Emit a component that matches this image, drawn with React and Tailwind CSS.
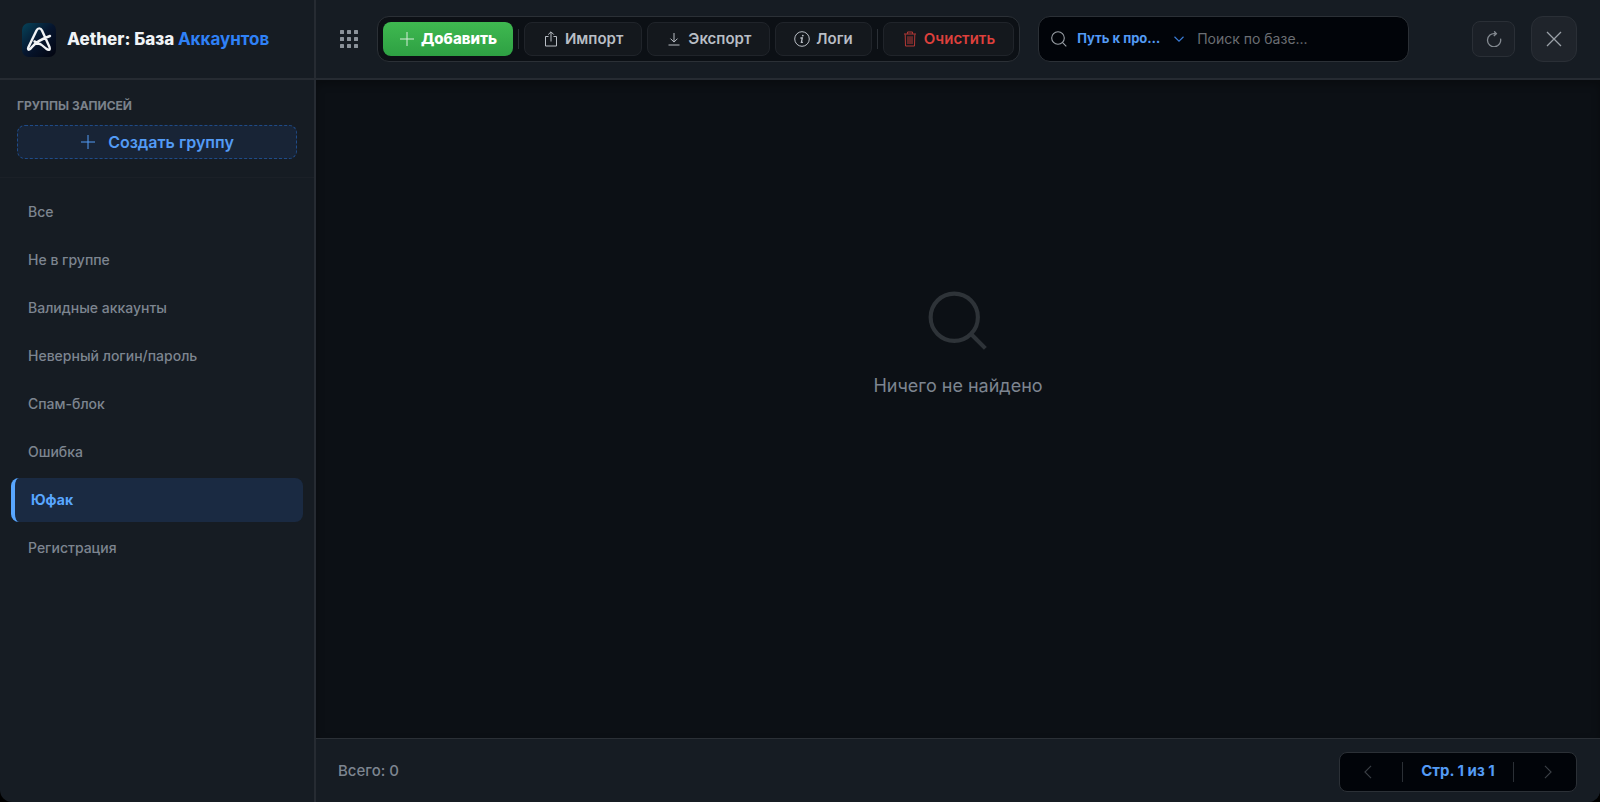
import React, { useState } from "react";

const groups = [
  "Все",
  "Не в группе",
  "Валидные аккаунты",
  "Неверный логин/пароль",
  "Спам-блок",
  "Ошибка",
  "Юфак",
  "Регистрация",
];

const Icon = ({ children, className, strokeWidth = 1 }) => (
  <svg
    viewBox="0 0 16 16"
    fill="none"
    stroke="currentColor"
    strokeWidth={strokeWidth}
    className={className}
    aria-hidden="true"
  >
    {children}
  </svg>
);

const PlusIcon = ({ className }) => (
  <Icon className={className}>
    <path d="M8 1v14M1 8h14" />
  </Icon>
);

const ShareIcon = ({ className }) => (
  <Icon className={className}>
    <path d="M5.5 5.5h-3v9.500h11v-9.500h-3" />
    <path d="M8 10.500V1M5.200 3.600L8 0.800l2.800 2.800" />
  </Icon>
);

const DownloadIcon = ({ className }) => (
  <Icon className={className}>
    <path d="M8 2v9M4.500 7.600L8 11.100l3.500-3.500M2.500 14h11" />
  </Icon>
);

const InfoIcon = ({ className }) => (
  <Icon className={className}>
    <circle cx="8" cy="8" r="7.3" />
    <path d="M6.4 7h1.9L7.4 11.4h1.5" strokeWidth="1.3" />
    <circle cx="8.8" cy="4.6" r="0.9" fill="currentColor" stroke="none" />
  </Icon>
);

const TrashIcon = ({ className }) => (
  <Icon className={className}>
    <path d="M2 3h12M5.500 2.800V1h5v1.800M3.200 3.300l0.300 11.700h9l0.300-11.700" />
    <path d="M6 5.200v7.800M8 5.200v7.800M10 5.200v7.800" />
  </Icon>
);

const SearchIcon = ({ className }) => (
  <Icon className={className} strokeWidth={1.1}>
    <circle cx="7" cy="7" r="6.3" />
    <path d="M11.400 11.400l3.900 3.900" />
  </Icon>
);

const GripIcon = ({ className }) => (
  <svg viewBox="0 0 18 18" fill="currentColor" className={className} aria-hidden="true">
    {[0, 7, 14].map((y) =>
      [0, 7, 14].map((x) => (
        <rect key={`${x}-${y}`} x={x} y={y} width="4" height="4" rx="0.6" />
      ))
    )}
  </svg>
);

const Logo = () => (
  <svg viewBox="0 0 34 34" className="size-[34px] shrink-0" aria-hidden="true">
    <defs>
      <linearGradient id="logo-bg" x1="0" y1="0" x2="1" y2="1">
        <stop offset="0" stopColor="#064359" />
        <stop offset="0.5" stopColor="#06152e" />
        <stop offset="1" stopColor="#03040f" />
      </linearGradient>
    </defs>
    <rect width="34" height="34" rx="7" fill="url(#logo-bg)" />
    <path
      d="M28 13C22 15 14 19 9.500 24.500C7.500 27.500 5 27.500 6.500 24L14.500 7.500C15.800 4.700 18.700 4.700 20 7.500L27.500 24C28.500 27.500 26.500 27.500 24 25.500C20.500 22 17 20 12.500 18.500"
      fill="none"
      stroke="#f1f3f5"
      strokeWidth="2.400"
      strokeLinecap="round"
      strokeLinejoin="round"
    />
  </svg>
);

const ToolButton = ({ children, className = "text-[#b9bec5]" }) => (
  <button
    type="button"
    className={`flex h-[34px] items-center gap-1.5 rounded-lg border border-[#20242a] bg-[#14181d] px-[18px] text-[15px] font-semibold ${className}`}
  >
    {children}
  </button>
);

const Divider = () => <span className="h-5 w-px bg-[#2b3036]" />;

const Sidebar = () => {
  const [active, setActive] = useState("Юфак");

  return (
    <aside className="flex w-[316px] shrink-0 flex-col border-r-2 border-[#262b32]">
      <div className="flex h-20 items-center gap-[11px] border-b-2 border-[#262b32] px-[22px] pt-0.5">
        <Logo />
        <h1 className="text-[17px] font-extrabold whitespace-nowrap text-[#f0f3f6]">
          Aether: База <span className="font-bold text-[#2f81f7]">Аккаунтов</span>
        </h1>
      </div>

      <div className="border-b border-[#1b2027] px-[17px] py-[18px]">
        <h2 className="mb-[11px] text-xs font-bold text-[#7b828b] uppercase">
          Группы записей
        </h2>
        <button
          type="button"
          className="flex h-[34px] w-full items-center justify-center gap-3 rounded-lg border border-dashed border-[#1f4b88] bg-[#182436] text-base font-semibold text-[#539bf5]"
        >
          <PlusIcon className="size-4" />
          Создать группу
        </button>
      </div>

      <nav className="flex flex-col gap-1 px-[11px] pt-3">
        {groups.map((group) => (
          <button
            key={group}
            type="button"
            onClick={() => setActive(group)}
            className={
              group === active
                ? "flex h-11 items-center rounded-lg border-l-4 border-[#58a6ff] bg-[#1a2a42] px-4 text-sm font-bold text-[#58a6ff]"
                : "flex h-11 items-center rounded-lg border border-transparent px-4 text-sm font-medium text-[#7d8590]"
            }
          >
            {group}
          </button>
        ))}
      </nav>
    </aside>
  );
};

const Toolbar = () => (
  <header className="flex h-20 shrink-0 items-center border-b-2 border-[#262b32] bg-[#161c23] pr-[23px] pl-6">
    <GripIcon className="mr-[19px] size-[18px] shrink-0 text-[#8b929a]" />

    <div className="flex h-[46px] shrink-0 items-center gap-[5px] rounded-xl border border-[#2b3036] bg-[#0c1015] px-[5px]">
      <button
        type="button"
        className="flex h-[34px] items-center gap-1.5 rounded-lg bg-linear-to-b from-[#3fb950] to-[#2ea043] px-4 text-[15px] font-extrabold text-white"
      >
        <PlusIcon className="size-4 opacity-80" />
        Добавить
      </button>
      <Divider />
      <ToolButton>
        <ShareIcon className="size-4" />
        Импорт
      </ToolButton>
      <ToolButton>
        <DownloadIcon className="size-4" />
        Экспорт
      </ToolButton>
      <ToolButton>
        <InfoIcon className="size-4" />
        Логи
      </ToolButton>
      <Divider />
      <ToolButton className="text-[#dd403c]">
        <TrashIcon className="size-4 opacity-80" />
        Очистить
      </ToolButton>
    </div>

    <div className="ml-[18px] flex h-[46px] w-[371px] min-w-0 items-center rounded-xl border border-[#2b3036] bg-[#010409] px-3">
      <SearchIcon className="size-4 shrink-0 text-[#9aa0a7]" />
      <div className="relative ml-2.5 flex w-[108px] shrink-0 items-center">
        <select
          aria-label="Поле поиска"
          className="w-[88px] appearance-none truncate bg-transparent text-[13px] font-bold text-[#539bf5] outline-none"
        >
          <option>Путь к профилю</option>
          <option>Логин</option>
        </select>
        <Icon className="pointer-events-none absolute right-0 size-3 text-[#3b7dd8]" strokeWidth={1.5}>
          <path d="M2 5l6 6 6-6" />
        </Icon>
      </div>
      <input
        type="text"
        aria-label="Поиск по базе"
        placeholder="Поиск по базе..."
        className="ml-3 min-w-0 flex-1 bg-transparent text-sm text-[#c9d1d9] outline-none placeholder:text-[#6b6e73]"
      />
    </div>

    <div className="ml-auto flex shrink-0 items-center gap-4">
      <button
        type="button"
        aria-label="Обновить"
        className="flex h-9 w-[43px] items-center justify-center rounded-lg border border-[#2a2f36] bg-[#1b2027] text-[#858b92]"
      >
        <Icon className="size-4" strokeWidth={1.3}>
          <path d="M14.500 7.600A6.600 6.600 0 1 1 9.200 2.700M8.200 0.300l2.200 2.500-2.600 2.200" />
        </Icon>
      </button>
      <button
        type="button"
        aria-label="Закрыть"
        className="flex size-[46px] items-center justify-center rounded-xl border border-[#2a2f36] bg-[#1f242b] text-[#9aa0a7]"
      >
        <Icon className="size-4" strokeWidth={1.3}>
          <path d="M1 1l14 14M15 1L1 15" />
        </Icon>
      </button>
    </div>
  </header>
);

const Footer = () => (
  <footer className="flex h-16 shrink-0 items-center justify-between border-t border-[#2b3036] bg-[#161c23] pt-0.5 pr-[23px] pl-[22px]">
    <p className="text-[15px] font-medium text-[#7d8590]">Всего: 0</p>
    <div className="flex h-10 w-[238px] items-center justify-between rounded-lg border border-[#2b3036] bg-[#010409] px-2">
      <button
        type="button"
        aria-label="Предыдущая страница"
        className="flex h-8 w-10 items-center justify-center text-[#3a3f45]"
      >
        <Icon className="size-3.5" strokeWidth={1.3}>
          <path d="M11.500 1L4.500 8l7 7" />
        </Icon>
      </button>
      <Divider />
      <span className="px-1 text-[15px] font-bold text-[#539bf5]">Стр. 1 из 1</span>
      <Divider />
      <button
        type="button"
        aria-label="Следующая страница"
        className="flex h-8 w-10 items-center justify-center text-[#3a3f45]"
      >
        <Icon className="size-3.5" strokeWidth={1.3}>
          <path d="M4.500 1l7 7-7 7" />
        </Icon>
      </button>
    </div>
  </footer>
);

const App = () => (
  <div className="min-h-screen bg-black font-[Inter,sans-serif]">
    <div className="flex min-h-screen overflow-hidden rounded-b-xl bg-[#161c23]">
      <Sidebar />
      <div className="flex min-w-0 flex-1 flex-col">
        <Toolbar />
        <main className="flex flex-1 flex-col items-center bg-[#0c1015] pt-[211px] shadow-[inset_0_4px_8px_rgba(0,0,0,0.3)]">
          <SearchIcon className="size-[60px] text-[#2e3338]" />
          <p className="mt-[21px] text-lg text-[#7d8590]">Ничего не найдено</p>
        </main>
        <Footer />
      </div>
    </div>
  </div>
);

export default App;
